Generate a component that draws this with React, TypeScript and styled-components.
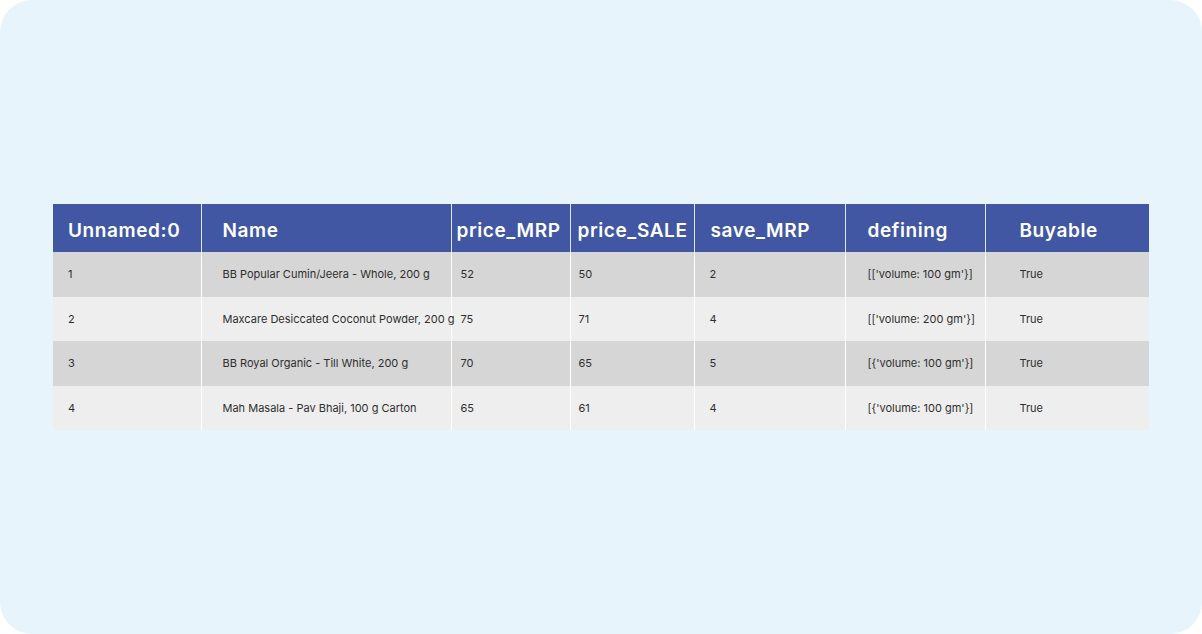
import React from 'react';
import styled, { createGlobalStyle } from 'styled-components';

const GlobalStyle = createGlobalStyle`
  html, body {
    margin: 0;
    padding: 0;
    background: #ffffff;
  }
  body {
    font-family: "Inter", "Noto Sans", sans-serif;
  }
`;

const Page = styled.div`
  width: 1202px;
  height: 634px;
  box-sizing: border-box;
  background-color: #e8f4fb;
  border-radius: 32px;
  display: flex;
  align-items: center;
  justify-content: center;
`;

const Table = styled.table`
  border-collapse: collapse;
  table-layout: fixed;
  width: 1096px;
`;

const HeadCell = styled.th<{ $pad: number; $w: number }>`
  width: ${({ $w }) => $w}px;
  height: 48px;
  box-sizing: border-box;
  padding: 5px 0 0 ${({ $pad }) => $pad}px;
  background-color: #4157a3;
  color: #ffffff;
  font-size: 19px;
  font-weight: 600;
  text-align: left;
  white-space: nowrap;
  border-left: 1px solid #dfe6f3;
  letter-spacing: 0.6px;

  &:first-child {
    border-left: none;
  }
`;

const Row = styled.tr<{ $odd: boolean }>`
  background-color: ${({ $odd }) => ($odd ? '#d6d6d6' : '#eeeeee')};
`;

const Cell = styled.td<{ $pad: number }>`
  height: 44.5px;
  box-sizing: border-box;
  padding: 0 0 0 ${({ $pad }) => $pad}px;
  font-size: 11px;
  color: #2e2e2e;
  white-space: nowrap;
  border-left: 1px solid #ffffff;

  &:first-child {
    border-left: none;
  }
`;

const columns = [
  { key: 'id', label: 'Unnamed:0', w: 148, head: 15, pad: 15 },
  { key: 'name', label: 'Name', w: 250, head: 21, pad: 21 },
  { key: 'mrp', label: 'price_MRP', w: 119, head: 5, pad: 9 },
  { key: 'sale', label: 'price_SALE', w: 124, head: 7, pad: 8 },
  { key: 'save', label: 'save_MRP', w: 151, head: 16, pad: 15 },
  { key: 'def', label: 'defining', w: 140, head: 22, pad: 22 },
  { key: 'buy', label: 'Buyable', w: 164, head: 34, pad: 34 },
];

const rows = [
  ['1', 'BB Popular Cumin/Jeera - Whole, 200 g', '52', '50', '2', "[['volume: 100 gm'}]", 'True'],
  ['2', 'Maxcare Desiccated Coconut Powder, 200 g', '75', '71', '4', "[['volume: 200 gm'}]", 'True'],
  ['3', 'BB Royal Organic - Till White, 200 g', '70', '65', '5', "[{'volume: 100 gm'}]", 'True'],
  ['4', 'Mah Masala - Pav Bhaji, 100 g Carton', '65', '61', '4', "[{'volume: 100 gm'}]", 'True'],
];

export default function App() {
  return (
    <>
      <GlobalStyle />
      <Page>
        <Table>
          <thead>
            <tr>
              {columns.map((c) => (
                <HeadCell key={c.key} $pad={c.head} $w={c.w}>
                  {c.label}
                </HeadCell>
              ))}
            </tr>
          </thead>
          <tbody>
            {rows.map((r, i) => (
              <Row key={r[0]} $odd={i % 2 === 0}>
                {r.map((v, j) => (
                  <Cell key={columns[j].key} $pad={columns[j].pad}>
                    {v}
                  </Cell>
                ))}
              </Row>
            ))}
          </tbody>
        </Table>
      </Page>
    </>
  );
}
